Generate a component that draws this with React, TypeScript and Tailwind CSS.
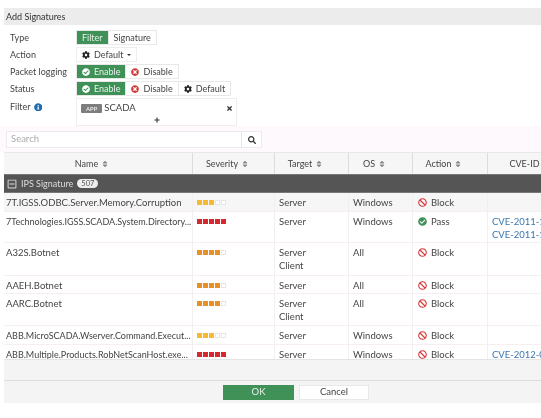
import { FaBan, FaCheckCircle, FaCog, FaInfoCircle, FaPlus, FaRegMinusSquare, FaSearch, FaSort, FaTimes, FaTimesCircle } from 'react-icons/fa'

const cols = 'grid grid-cols-[189px_82px_74px_64px_75px_53px]'

const sevColors: Record<string, string> = {
  medium: 'bg-[#f5b932]',
  high: 'bg-[#e88f25]',
  critical: 'bg-[#d5282f]',
}

const rows = [
  { name: '7T.IGSS.ODBC.Server.Memory.Corruption', sev: 'medium', n: 3, target: ['Server'], os: 'Windows', action: 'Block', cve: [], h: 'h-[19px]', tint: true, small: false },
  { name: '7Technologies.IGSS.SCADA.System.Directory...', sev: 'critical', n: 5, target: ['Server'], os: 'Windows', action: 'Pass', cve: ['CVE-2011-1', 'CVE-2011-1'], h: 'h-[31px]', tint: false, small: true },
  { name: 'A32S.Botnet', sev: 'high', n: 4, target: ['Server', 'Client'], os: 'All', action: 'Block', cve: [], h: 'h-[33px]', tint: false, small: false },
  { name: 'AAEH.Botnet', sev: 'high', n: 4, target: ['Server'], os: 'All', action: 'Block', cve: [], h: 'h-[18px]', tint: false, small: false },
  { name: 'AARC.Botnet', sev: 'high', n: 4, target: ['Server', 'Client'], os: 'All', action: 'Block', cve: [], h: 'h-[32px]', tint: false, small: false },
  { name: 'ABB.MicroSCADA.Wserver.Command.Execut...', sev: 'medium', n: 3, target: ['Server'], os: 'Windows', action: 'Block', cve: [], h: 'h-[19px]', tint: false, small: true },
  { name: 'ABB.Multiple.Products.RobNetScanHost.exe...', sev: 'critical', n: 5, target: ['Server'], os: 'Windows', action: 'Block', cve: ['CVE-2012-0'], h: 'h-[19px]', tint: false, small: true },
]

function Severity({ level, count }: { level: string; count: number }) {
  return (
    <div className="flex gap-px mt-[2px]">
      {[0, 1, 2, 3, 4].map((i) => (
        <span key={i} className={`w-[5px] h-[5px] ${i < count ? sevColors[level] : 'bg-white border border-[#e6e6e6]'}`} />
      ))}
    </div>
  )
}

function Label({ children }: { children: React.ReactNode }) {
  return <div className="w-[66px] shrink-0 text-[#444]">{children}</div>
}

function Toggle({ icon, label, on, first }: { icon?: React.ReactNode; label: string; on?: boolean; first?: boolean }) {
  return (
    <div className={`h-[15px] px-[5px] flex items-center gap-[4px] border border-[#e8e8e8] ${first ? '' : '-ml-px'} ${on ? 'bg-[#3f9158] text-[#e6f1e9] border-[#3f9158]' : 'bg-white text-[#444]'}`}>
      {icon}
      {label}
    </div>
  )
}

function Head({ label, sort = true }: { label: string; sort?: boolean }) {
  return (
    <div className={`flex items-center justify-center gap-[3px] border-r border-[#dcdcdc] last:border-r-0 ${sort ? 'pr-[12px]' : 'pl-[20px]'}`}>
      {label}
      {sort && <FaSort className="text-[8px] text-[#888]" />}
    </div>
  )
}

export default function App() {
  return (
    <div className="w-[541px] h-[418px] bg-white overflow-hidden pt-2 text-[9.5px] text-[#444] font-['Lato',sans-serif] blur-[0.3px]">
      <div className="ml-1 h-[17px] bg-[#ececec] flex items-center px-[2px] text-[9px] text-[#333]">Add Signatures</div>

      <div className="pl-[10px] pt-[5px] flex flex-col gap-[2px] text-[9px]">
        <div className="flex items-center">
          <Label>Type</Label>
          <Toggle label="Filter" on first />
          <Toggle label="Signature" />
        </div>
        <div className="flex items-center">
          <Label>Action</Label>
          <div className="h-[15px] px-[5px] flex items-center gap-[4px] border border-[#eee]">
            <FaCog className="text-[8px] text-[#222]" />
            Default
            <span className="w-0 h-0 border-x-[2px] border-x-transparent border-t-[2px] border-t-[#333]" />
          </div>
        </div>
        <div className="flex items-center">
          <Label>Packet logging</Label>
          <Toggle label="Enable" on first icon={<FaCheckCircle className="text-[8px] text-white" />} />
          <Toggle label="Disable" icon={<FaTimesCircle className="text-[8px] text-[#d33a3a]" />} />
        </div>
        <div className="flex items-center">
          <Label>Status</Label>
          <Toggle label="Enable" on first icon={<FaCheckCircle className="text-[8px] text-white" />} />
          <Toggle label="Disable" icon={<FaTimesCircle className="text-[8px] text-[#d33a3a]" />} />
          <Toggle label="Default" icon={<FaCog className="text-[8px] text-[#222]" />} />
        </div>
        <div className="flex items-start">
          <Label>
            <span className="flex items-center gap-[3px] pt-[2px]">
              Filter <FaInfoCircle className="text-[8.5px] text-[#1c6eb0]" />
            </span>
          </Label>
          <div className="w-[161px] h-[28px] border border-[#eee] px-[4px] pt-[2px] flex flex-col">
            <div className="flex items-center">
              <span className="bg-[#7d7d7d] text-white text-[6px] px-[5px] h-[9px] flex items-center mr-[2px] rounded-[1px]">APP</span>
              <span className="text-[9.5px] text-[#444]">SCADA</span>
              <FaTimes className="ml-auto -mr-[1px] text-[7px] text-[#333]" />
            </div>
            <FaPlus className="self-center mt-[2px] text-[6px] text-[#333]" />
          </div>
        </div>
      </div>

      <div className="pt-[5px] pb-[4px] pl-[6px] bg-[#fdf9fd]">
        <div className="flex items-stretch h-[17px] w-[256px] bg-white border border-[#efe8ef]">
          <div className="flex-1 flex items-center px-[4px] text-[#aaa]">Search</div>
          <div className="w-[20px] flex items-center justify-center border-l border-[#e6e6e6]">
            <FaSearch className="text-[8px] text-[#333]" />
          </div>
        </div>
      </div>

      <div className="ml-1 h-[207px] overflow-hidden">
        <div className={`${cols} h-[22px] bg-[#f6f6f6] border-t border-[#e8e8e8] text-[9px]`}>
          <Head label="Name" />
          <Head label="Severity" />
          <Head label="Target" />
          <Head label="OS" />
          <Head label="Action" />
          <Head label="CVE-ID" sort={false} />
        </div>
        <div className="h-[19px] bg-[#555] flex items-center pl-[3px] gap-[4px] text-[9px] text-[#ddd] border-y border-[#777]">
          <FaRegMinusSquare className="text-[10px]" />
          IPS Signature
          <span className="h-[9px] px-[4px] rounded-full bg-[#eee] text-[#555] text-[7.5px] flex items-center">507</span>
        </div>
        {rows.map((r) => (
          <div key={r.name} className={`${cols} ${r.h} border-b border-[#f7eef2] leading-[13px] ${r.tint ? 'bg-[#f6f6f6]' : 'bg-white'}`}>
            <div className={`pl-[2px] pt-[3px] border-r border-[#f3eef1] whitespace-nowrap overflow-hidden ${r.small ? 'text-[9px]' : ''}`}>{r.name}</div>
            <div className="pl-[4px] pt-[5px] border-r border-[#f3eef1]">
              <Severity level={r.sev} count={r.n} />
            </div>
            <div className="pl-[4px] pt-[3px] border-r border-[#f3eef1]">
              {r.target.map((t) => (
                <div key={t}>{t}</div>
              ))}
            </div>
            <div className="pl-[4px] pt-[3px] border-r border-[#f3eef1]">{r.os}</div>
            <div className="pl-[5px] pt-[3px] border-r border-[#f3eef1] flex items-start gap-[4px]">
              {r.action === 'Pass' ? (
                <FaCheckCircle className="mt-[2px] text-[9px] text-[#3f9158]" />
              ) : (
                <FaBan className="mt-[2px] text-[9px] text-[#d33a3a]" />
              )}
              {r.action}
            </div>
            <div className="pl-[4px] pt-[3px] text-[#3a76ad] whitespace-nowrap overflow-hidden">
              {r.cve.map((c, i) => (
                <div key={i}>{c}</div>
              ))}
            </div>
          </div>
        ))}
      </div>

      <div className="ml-1 h-[21px] bg-[#f4f4f4] border-t border-[#e4e4e4]" />
      <div className="ml-1 h-[23px] bg-[#f4f4f4] border-t border-[#dcdcdc] flex items-center pl-[219px] gap-[5px]">
        <div className="w-[71px] h-[15px] bg-[#3f9158] text-[#e6f1e9] flex items-center justify-center">OK</div>
        <div className="w-[70px] h-[15px] bg-white border border-[#e8e8e8] flex items-center justify-center">Cancel</div>
      </div>
    </div>
  )
}
